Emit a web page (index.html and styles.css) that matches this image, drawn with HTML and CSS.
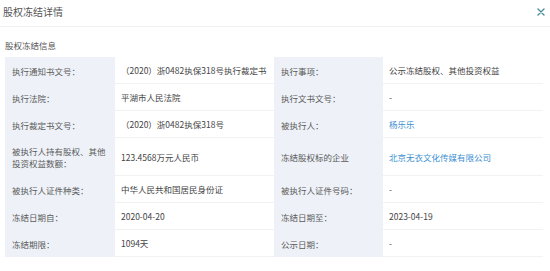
FILE: index.html
```
<!DOCTYPE html>
<html lang="zh-CN">
<head>
<meta charset="utf-8">
<link rel="stylesheet" href="styles.css">
</head>
<body>
<div class="dialog">
  <div class="header">
    <span class="title">股权冻结详情</span>
    <svg class="close" width="8" height="8" viewBox="0 0 8 8"><path d="M1 1L7 7M7 1L1 7" stroke="#4d8c9c" stroke-width="1.4" fill="none" stroke-linecap="round"/></svg>
  </div>
  <div class="body">
    <div class="subtitle">股权冻结信息</div>
    <div class="table">
      <div class="lbl">执行通知书文号：</div><div class="val">（2020）浙0482执保318号执行裁定书</div>
      <div class="lbl">执行事项：</div><div class="val">公示冻结股权、其他投资权益</div>

      <div class="lbl">执行法院：</div><div class="val">平湖市人民法院</div>
      <div class="lbl">执行文书文号：</div><div class="val">-</div>

      <div class="lbl">执行裁定书文号：</div><div class="val">（2020）浙0482执保318号</div>
      <div class="lbl">被执行人：</div><div class="val link">杨乐乐</div>

      <div class="lbl tall">被执行人持有股权、其他投资权益数额：</div><div class="val">123.4568万元人民币</div>
      <div class="lbl">冻结股权标的企业</div><div class="val link">北京无衣文化传媒有限公司</div>

      <div class="lbl">被执行人证件种类：</div><div class="val">中华人民共和国居民身份证</div>
      <div class="lbl">被执行人证件号码：</div><div class="val">-</div>

      <div class="lbl">冻结日期自：</div><div class="val">2020-04-20</div>
      <div class="lbl">冻结日期至：</div><div class="val">2023-04-19</div>

      <div class="lbl">冻结期限：</div><div class="val">1094天</div>
      <div class="lbl">公示日期：</div><div class="val">-</div>
    </div>
  </div>
</div>
</body>
</html>
```
FILE: styles.css
```
* { box-sizing: border-box; }
html, body { margin: 0; padding: 0; background: #fff; }
body {
  font-family: "Noto Sans CJK SC", "Noto Sans", sans-serif;
  color: #444;
  width: 550px;
  height: 271px;
  overflow: hidden;
}
.header {
  height: 27px;
  border-bottom: 1px solid #f0f0f0;
  display: flex;
  align-items: center;
  justify-content: space-between;
  padding: 0 5px 3px 3px;
}
.title {
  font-size: 10px;
  color: #555;
}
.close {
  display: block;
}
.body {
  padding: 12px 7px 0 5px;
}
.subtitle {
  font-size: 8.5px;
  color: #555;
  line-height: 12px;
  margin-bottom: 6px;
}
.table {
  display: grid;
  grid-template-columns: 110px 159px 109px 160px;
}
.lbl, .val {
  font-size: 8.5px;
  line-height: 12px;
  padding: 7px 0 7px 7px;
  display: flex;
  align-items: center;
}
.lbl {
  background: #eef2f8;
  color: #5a5a5a;
}
.val {
  background: #fff;
  color: #444;
  padding-left: 6px;
  border-bottom: 1px solid #f2f2f2;
}
.lbl.tall {
  padding-right: 8px;
}
.link { color: #3d8fd1; }
```
